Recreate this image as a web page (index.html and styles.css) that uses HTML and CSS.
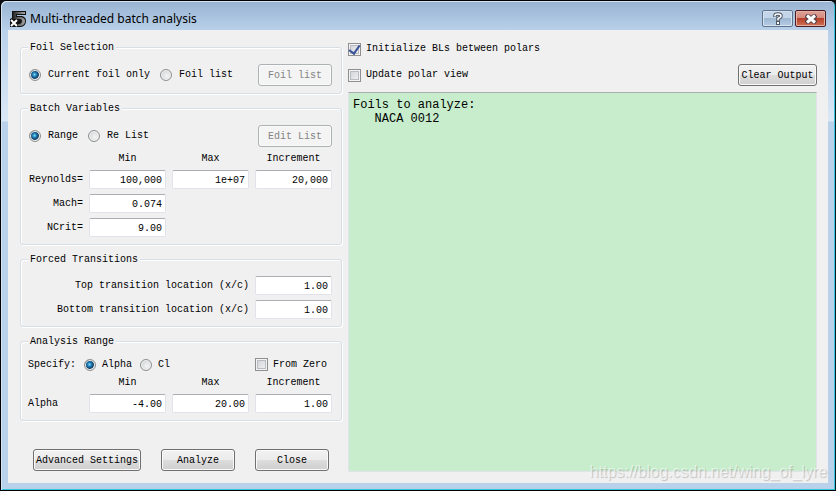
FILE: index.html
```html
<!DOCTYPE html>
<html lang="en">
<head>
    <meta charset="UTF-8">
    <meta name="viewport" content="width=device-width, initial-scale=1.0">
    <title>Multi-threaded batch analysis</title>
    <link rel="stylesheet" href="styles.css">
</head>
<body>
    <div class="window">
        <header class="titlebar">
            <svg class="app-icon" width="16" height="16" viewBox="0 0 16 16">
                <defs>
                    <linearGradient id="five" x2="1">
                        <stop offset="0" stop-color="#222"/>
                        <stop offset="1" stop-color="#aaa"/>
                    </linearGradient>
                </defs>
                <path d="M2 0H16V4H7V5H12Q16 6 16 10Q16 15 11 16H0V8L2 7Z" fill="#111"/>
                <path d="M3 1H15V3H6V6H11Q15 7 15 10Q15 14 11 15H8V13H10Q12 12 12 10Q12 8 10 8H3Z" fill="url(#five)"/>
                <path d="M1 9L7 15M7 9L1 15" stroke="#fff" stroke-width="2"/>
            </svg>
            <h1>Multi-threaded batch analysis</h1>
            <button type="button" class="caption-btn" aria-label="Help">
                <svg width="10" height="13" viewBox="0 0 10 13">
                    <path d="M2 5V3.500Q2 2 5 2T8 4Q8 5.500 5 6.500V9" fill="none" stroke="#4b5666" stroke-width="3.500"/>
                    <rect x="3" y="9" width="4" height="4" fill="#4b5666"/>
                    <path d="M2 4.500V3.500Q2 2 5 2T8 4Q8 5.500 5 6.500V8.500" fill="none" stroke="#fff" stroke-width="1.500"/>
                    <rect x="4" y="10" width="2" height="2" fill="#fff"/>
                </svg>
            </button>
            <button type="button" class="caption-btn caption-close" aria-label="Close window">
                <svg width="12" height="10" viewBox="0 0 12 10">
                    <path d="M1 1L11 9M11 1L1 9" stroke="#55404a" stroke-width="5"/>
                    <path d="M2 1.500L10 8.500M10 1.500L2 8.500" stroke="#fff" stroke-width="3"/>
                </svg>
            </button>
        </header>

        <main class="content">
            <form class="settings">
                <fieldset>
                    <legend>Foil Selection</legend>
                    <div class="row">
                        <label><input type="radio" name="foil" checked>Current foil only</label>
                        <label><input type="radio" name="foil">Foil list</label>
                        <button type="button" class="btn push" disabled>Foil list</button>
                    </div>
                </fieldset>

                <fieldset>
                    <legend>Batch Variables</legend>
                    <div class="row">
                        <label><input type="radio" name="batch" checked>Range</label>
                        <label><input type="radio" name="batch">Re List</label>
                        <button type="button" class="btn push" disabled>Edit List</button>
                    </div>
                    <div class="fields">
                        <span class="head first">Min</span>
                        <span class="head">Max</span>
                        <span class="head">Increment</span>
                        <label class="name" for="reMin">Reynolds=</label>
                        <input type="text" id="reMin" value="100,000">
                        <input type="text" aria-label="Reynolds max" value="1e+07">
                        <input type="text" aria-label="Reynolds increment" value="20,000">
                        <label class="name" for="mach">Mach=</label>
                        <input type="text" id="mach" value="0.074">
                        <label class="name" for="ncrit">NCrit=</label>
                        <input type="text" id="ncrit" value="9.00">
                    </div>
                </fieldset>

                <fieldset>
                    <legend>Forced Transitions</legend>
                    <div class="fields">
                        <label class="name wide" for="topTr">Top transition location (x/c)</label>
                        <input type="text" id="topTr" value="1.00">
                        <label class="name wide" for="botTr">Bottom transition location (x/c)</label>
                        <input type="text" id="botTr" value="1.00">
                    </div>
                </fieldset>

                <fieldset>
                    <legend>Analysis Range</legend>
                    <div class="row specify">
                        <span>Specify:</span>
                        <label><input type="radio" name="specify" checked>Alpha</label>
                        <label><input type="radio" name="specify">Cl</label>
                        <label class="push"><input type="checkbox">From Zero</label>
                    </div>
                    <div class="fields">
                        <span class="head first">Min</span>
                        <span class="head">Max</span>
                        <span class="head">Increment</span>
                        <label for="alphaMin">Alpha</label>
                        <input type="text" id="alphaMin" value="-4.00">
                        <input type="text" aria-label="Alpha max" value="20.00">
                        <input type="text" aria-label="Alpha increment" value="1.00">
                    </div>
                </fieldset>

                <div class="actions">
                    <button type="button" class="btn btn-wide">Advanced Settings</button>
                    <button type="button" class="btn">Analyze</button>
                    <button type="button" class="btn">Close</button>
                </div>
            </form>

            <section class="results">
                <div class="option">
                    <label><input type="checkbox" checked>Initialize BLs between polars</label>
                </div>
                <div class="row option-last">
                    <label><input type="checkbox">Update polar view</label>
                    <button type="button" class="btn btn-clear push">Clear Output</button>
                </div>
                <textarea class="output" aria-label="Output" readonly>Foils to analyze:
   NACA 0012</textarea>
            </section>
        </main>
        <div class="watermark">https://blog.csdn.net/wing_of_lyre</div>
    </div>
</body>
</html>
```

FILE: styles.css
```css
* {
    margin: 0;
    padding: 0;
    box-sizing: border-box;
}

body {
    background: #101014;
    font: 10px/12px "Liberation Mono", monospace;
    color: #000;
}

input, button, textarea {
    font: inherit;
    color: inherit;
}

.window {
    position: relative;
    display: flex;
    flex-direction: column;
    min-height: 100vh;
    padding: 0 7px 7px;
    border: 1px solid #000;
    border-right-color: #0a1c24;
    border-radius: 6px 6px 0 0;
    background: linear-gradient(#98b3d2, #b9d1ea 30px, #dbe8f6 120px, #b9d1ea 121px);
    box-shadow: inset 1px 1px #d5e4f3, inset -1px -1px #35c4dc;
}

/* Title bar */
.titlebar {
    display: flex;
    align-items: center;
    height: 29px;
    padding: 6px 2px 0 2px;
}

.app-icon {
    margin-right: 4px;
}

.titlebar h1 {
    flex: 1;
    font: 12px/16px "Noto Sans", sans-serif;
}

.caption-btn {
    display: flex;
    align-items: center;
    justify-content: center;
    width: 31px;
    height: 17px;
    margin-left: 2px;
    border: 1px solid #62738c;
    border-radius: 2px;
    background: linear-gradient(#c3d5e8 50%, #9fb8d2 50%, #b4cce4);
    box-shadow: inset 0 0 0 1px #d5e3f1;
}

.caption-close {
    border-color: #4d1a22;
    background: linear-gradient(#e0a195, #d3887c 50%, #b83f28 50%, #cd7456);
    box-shadow: inset 0 0 0 1px #e3b0a4;
}

/* Layout */
.content {
    flex: 1;
    display: grid;
    grid-template-columns: 322px 1fr;
    gap: 6px;
    padding: 10px 11px 11px 12px;
    background: #f0f0f0;
}

.settings {
    display: flex;
    flex-direction: column;
    gap: 7px;
}

fieldset {
    min-width: 0;
    padding: 10px 9px 7px 7px;
    border: 1px solid #d5dfe5;
    border-radius: 3px;
    box-shadow: 1px 1px #fff, inset 1px 1px #fff;
}

legend {
    padding: 2px 2px 0;
    background: #f0f0f0;
}

label {
    white-space: nowrap;
}

.row {
    display: flex;
    align-items: center;
    gap: 10px;
    padding-left: 1px;
}

.row label, .option label {
    display: flex;
    align-items: center;
    gap: 7px;
}

.row .push {
    margin-left: auto;
}

.specify {
    gap: 8px;
    height: 13px;
    padding-left: 0;
}

.specify label {
    gap: 6px;
}

.specify .push {
    gap: 5px;
    width: 77px;
}

.fields {
    display: grid;
    grid-template-columns: 55px repeat(3, 77px);
    align-items: center;
    gap: 5px 6px;
}

.row + .fields {
    margin-top: 6px;
}

.head {
    text-align: center;
}

.first {
    grid-column: 2;
}

.name {
    grid-column: 1;
    text-align: right;
}

.wide {
    grid-column: 1 / 4;
}

/* Controls */
input[type="text"] {
    width: 100%;
    height: 19px;
    padding: 1px 3px 0;
    border: 1px solid #e2e3ea;
    border-top-color: #abadb3;
    border-radius: 2px;
    background: #fff;
    text-align: right;
}

input[type="radio"] {
    appearance: none;
    width: 12px;
    height: 12px;
    border: 1px solid #8e8f8f;
    border-radius: 50%;
    background: radial-gradient(circle at 60% 60%, #f4f4f4, #c8ccd0);
    box-shadow: inset 0 0 0 1px #f4f4f4;
}

input[type="radio"]:checked {
    background: radial-gradient(circle at 45% 45%, #7fd8f5 0, #1f80ba 2px, #12395c 4px, #c9d3da 5px);
}

input[type="checkbox"] {
    appearance: none;
    display: grid;
    place-items: center;
    width: 13px;
    height: 13px;
    border: 1px solid #8e8f8f;
    background: linear-gradient(135deg, #cbcfd5, #f6f6f6);
    box-shadow: inset 0 0 0 1px #f4f4f4, inset 0 0 0 2px #b8bcc2;
}

input[type="checkbox"]:checked::before {
    content: "";
    width: 5px;
    height: 9px;
    border: solid #3a5399;
    border-width: 0 2px 2px 0;
    transform: translateY(-1px) rotate(35deg);
}

.btn {
    width: 74px;
    height: 22px;
    padding-top: 1px;
    border: 1px solid #707070;
    border-radius: 3px;
    background: linear-gradient(#f2f2f2, #ebebeb 50%, #dddddd 50%, #cfcfcf);
    box-shadow: inset 0 0 0 1px #fafafa;
    white-space: nowrap;
}

.btn:disabled {
    border-color: #adb2b5;
    background: #f4f4f4;
    color: #838383;
}

.btn-wide {
    width: 108px;
}

.btn-clear {
    width: 79px;
}

.actions {
    display: flex;
    gap: 20px;
    margin-top: 21px;
    padding-left: 13px;
}

/* Output */
.results {
    display: flex;
    flex-direction: column;
}

.option {
    display: flex;
    height: 18px;
    margin-bottom: 6px;
}

.option-last {
    padding-left: 0;
    margin-bottom: 6px;
}

.option label, .option-last label {
    gap: 5px;
}

.output {
    flex: 1;
    width: 100%;
    padding: 5px 4px;
    border: 1px solid #e2e3ea;
    border-top-color: #abadb3;
    background: #c7edcc;
    font-size: 12px;
    line-height: 14px;
    outline: none;
    resize: none;
}

.watermark {
    position: absolute;
    right: 8px;
    bottom: 8px;
    font: 16px/20px "Liberation Sans", sans-serif;
    color: rgba(255, 255, 255, 0.6);
    text-shadow: 1px 1px 1px rgba(0, 0, 0, 0.2);
    pointer-events: none;
}
```
